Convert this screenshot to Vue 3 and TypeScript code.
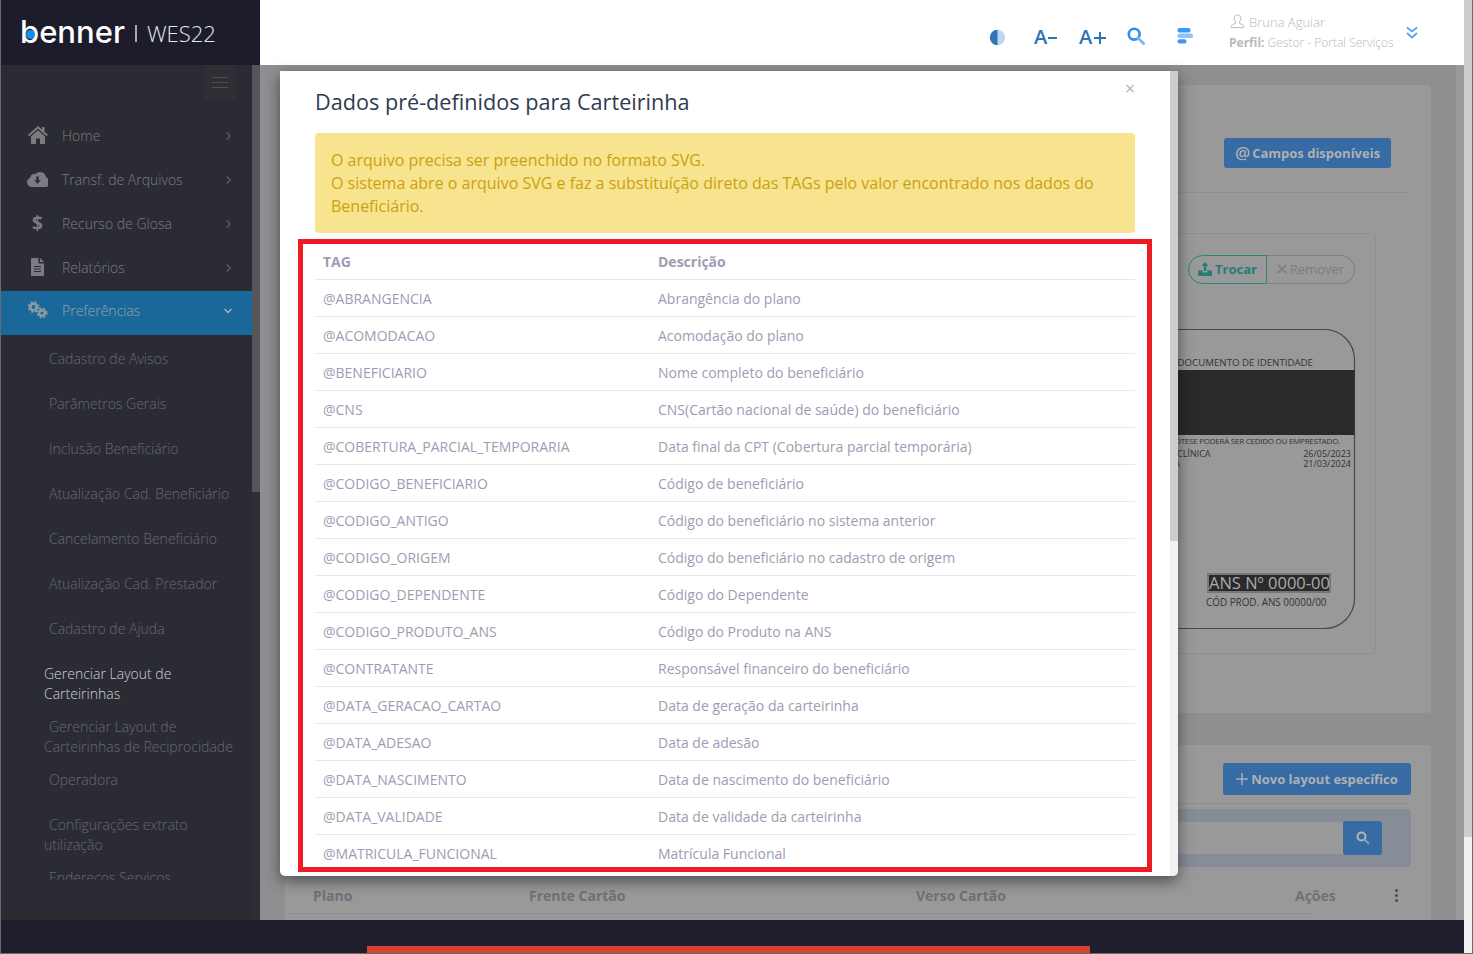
<template>
  <div class="page">
    <div class="window">
      <header class="top">
        <div class="brand">
          <span class="logo">benner<i class="logo-dot"></i></span>
          <span class="brand-sep"></span>
          <span class="brand-name">WES22</span>
        </div>
        <div class="topbar">
          <svg class="ico-contrast" viewBox="0 0 16 16" width="17" height="17">
            <circle cx="8" cy="8" r="7.2" fill="#bcd6ee" />
            <path d="M8 .8a7.2 7.2 0 0 0 0 14.4z" fill="#2f74b5" />
          </svg>
          <span class="font-btn minus">A<i></i></span>
          <span class="font-btn plus">A<i></i><b></b></span>
          <svg class="ico-search" viewBox="0 0 18 18" width="18" height="18">
            <circle cx="7.2" cy="7.2" r="5.4" fill="none" stroke="#2a8ff0" stroke-width="2.6" />
            <path d="M11 11l5.6 5.6" stroke="#7db9ee" stroke-width="2.8" stroke-linecap="round" />
          </svg>
          <svg class="ico-tasks" viewBox="0 0 16 16" width="16" height="16">
            <rect x="0.5" y="0" width="13" height="4.4" rx="2" fill="#3a9bf4" />
            <rect x="0.5" y="5.6" width="15.5" height="4.4" rx="2" fill="#8cc4f7" />
            <rect x="0.5" y="11.2" width="9" height="4.4" rx="2" fill="#3a9bf4" />
          </svg>
          <div class="user">
            <div class="user-name">
              <svg viewBox="0 0 16 16" width="15" height="15" fill="none" stroke="#b9b9b9" stroke-width="1">
                <path d="M8 1c-2.300 0-3.500 1.700-3.500 3.800 0 1.500.6 2.900 1.500 3.700v1.400c-1.800.8-4.500 1.500-4.800 3.100v1.500h13.600V13c-.3-1.600-3-2.300-4.800-3.100V8.500c.9-.8 1.500-2.200 1.500-3.700C11.500 2.700 10.300 1 8 1z" />
              </svg>
              Bruna Aguiar
            </div>
            <div class="user-role"><b>Perfil:</b> Gestor - Portal Serviços</div>
          </div>
          <svg class="ico-more" viewBox="0 0 12 13" width="12" height="13" fill="none" stroke="#4da3ff" stroke-width="1.7">
            <path d="M1 1.500l5 4 5-4M1 7l5 4.500L11 7" />
          </svg>
        </div>
      </header>

      <div class="middle">
        <aside class="sidebar">
          <div class="side-inner">
            <div class="burger-row">
              <div class="burger"><i></i><i></i><i></i></div>
            </div>
            <nav class="menu">
              <div class="menu-item" v-for="item in menuItems" :key="item.label" :class="{ active: item.active }">
                <span class="menu-ico">
                  <svg v-if="item.icon === 'home'" viewBox="0 0 20 18" width="20" height="18" fill="#7b7c81">
                    <path d="M10 0l4 3.500V1h2.500v4.700L20 8.800l-1.300 1.400L10 2.700 1.300 10.200 0 8.800z" />
                    <path d="M10 4.300l7 6V17a1 1 0 0 1-1 1h-4v-5.500H8V18H4a1 1 0 0 1-1-1v-6.700z" />
                  </svg>
                  <svg v-else-if="item.icon === 'cloud'" viewBox="0 0 21 16" width="21" height="16">
                    <path d="M5 16a4.800 4.800 0 0 1-1.700-9.300A4 4 0 0 1 8.500 3 6 6 0 0 1 19 6.500a4.800 4.800 0 0 1-2 9.500z" fill="#7b7c81" />
                    <path d="M9.300 5.500h2.400v3.700h2.100l-3.300 3.500-3.300-3.500h2.100z" fill="#2b2c33" />
                  </svg>
                  <span v-else-if="item.icon === 'dollar'" class="dollar">$</span>
                  <svg v-else-if="item.icon === 'file'" viewBox="0 0 13 18" width="13" height="18">
                    <path d="M1 0h6.500v5.500H13V17a1 1 0 0 1-1 1H1a1 1 0 0 1-1-1V1a1 1 0 0 1 1-1zM9 0l4 4H9z" fill="#7b7c81" />
                    <path d="M3 8.500h7M3 11h7M3 13.500h7" stroke="#2b2c33" stroke-width="1" />
                  </svg>
                  <svg v-else viewBox="0 0 21 18" width="21" height="18" fill="none" stroke="#8e9aa5">
                    <circle cx="6.500" cy="6" r="3.200" stroke-width="2.600" />
                    <circle cx="6.500" cy="6" r="5" stroke-width="1.800" stroke-dasharray="2 2" />
                    <circle cx="15" cy="12" r="2.800" stroke-width="2.400" />
                    <circle cx="15" cy="12" r="4.600" stroke-width="1.800" stroke-dasharray="2 1.700" />
                  </svg>
                </span>
                <span class="menu-label">{{ item.label }}</span>
                <svg class="menu-arrow" viewBox="0 0 8 10" :width="item.active ? 10 : 7" height="10" fill="none" stroke-width="1.300">
                  <path v-if="item.active" d="M.5 3l3.500 3.500L7.500 3" stroke="#9cb6c8" />
                  <path v-else d="M2 1l4 4-4 4" stroke="#62636a" />
                </svg>
              </div>
              <div
                v-for="sub in subItems"
                :key="sub.label"
                class="sub-item"
                :class="[{ current: sub.current }, sub.kind]"
              >{{ sub.label }}</div>
            </nav>
          </div>
          <div class="side-bar-track"><div class="side-bar-thumb"></div></div>
        </aside>

        <main class="main">
          <div class="content">
            <section class="card first">
              <div class="card-head">
                <button class="btn btn-fields"><span class="at">@</span>Campos disponíveis</button>
              </div>
              <div class="rule"></div>
              <div class="box">
                <div class="switcher">
                  <span class="swap">
                    <svg viewBox="0 0 14 14" width="14" height="14" fill="#257d75">
                      <path d="M7 0l3.500 4H8.200v5H5.800V4H3.500z" />
                      <path d="M1 8.500h3.500v2h5v-2H13a1 1 0 0 1 1 1V13a1 1 0 0 1-1 1H1a1 1 0 0 1-1-1V9.500a1 1 0 0 1 1-1z" />
                    </svg>
                    Trocar
                  </span>
                  <span class="remove">
                    <svg viewBox="0 0 10 10" width="10" height="10" stroke="#7c7c7c" stroke-width="1.500">
                      <path d="M1 1l8 8M9 1l-8 8" />
                    </svg>
                    Remover
                  </span>
                </div>
                <svg class="layout-card" viewBox="0 0 500 300" width="500" height="300">
                  <rect x="0.500" y="0.500" width="499" height="299" rx="30" fill="none" stroke="#474747" stroke-width="1.200" />
                  <text x="458" y="37" text-anchor="end" class="t9">PORTE UM DOCUMENTO DE IDENTIDADE</text>
                  <rect x="1" y="41" width="498.500" height="65" fill="#2b2a2b" />
                  <text x="485" y="115" text-anchor="end" class="t8">NESTA HIPÓTESE PODERÁ SER CEDIDO OU EMPRESTADO.</text>
                  <text x="322" y="128" class="t-date">CLÍNICA</text>
                  <text x="325" y="138" text-anchor="end" class="t-date">EMPRESA</text>
                  <text x="496" y="128" text-anchor="end" class="t-date">26/05/2023</text>
                  <text x="496" y="138" text-anchor="end" class="t-date">21/03/2024</text>
                  <svg x="352" y="244" width="124" height="20">
                    <rect x="1" y="1" width="122" height="18" fill="#2b2a2b" stroke="#777" stroke-width="2" />
                    <text x="2" y="16" class="ans">ANS Nº 0000-00</text>
                  </svg>
                  <text x="351" y="277" class="t-code">CÓD PROD. ANS 00000/00</text>
                </svg>
              </div>
            </section>

            <section class="card second">
              <div class="card-head-two">
                <button class="btn btn-new">
                  <svg viewBox="0 0 12 12" width="12" height="12" stroke="#a9adb2" stroke-width="1.500">
                    <path d="M6 0v12M0 6h12" />
                  </svg>
                  Novo layout específico
                </button>
              </div>
              <div class="rule thin"></div>
              <div class="filter">
                <div class="filter-input"></div>
                <button class="btn-search">
                  <svg viewBox="0 0 14 14" width="14" height="14" fill="none">
                    <circle cx="5.500" cy="5.500" r="4" stroke="#b3b8bd" stroke-width="2" />
                    <path d="M8.500 8.500l4.500 4.500" stroke="#8aa0b8" stroke-width="2" />
                  </svg>
                </button>
              </div>
              <div class="grid-head">
                <span>Plano</span>
                <span>Frente Cartão</span>
                <span>Verso Cartão</span>
                <span>Ações</span>
                <span class="kebab"><i></i><i></i><i></i></span>
              </div>
            </section>
          </div>
          <div class="main-band"></div>
        </main>
      </div>

      <footer class="footer"><div class="footer-bar"></div></footer>
    </div>
    <div class="page-scroll"><div class="page-thumb"></div></div>

    <div class="modal">
      <div class="modal-body">
        <span class="modal-close">×</span>
        <h4 class="modal-title">Dados pré-definidos para Carteirinha</h4>
        <div class="alert">
          O arquivo precisa ser preenchido no formato SVG.<br />
          O sistema abre o arquivo SVG e faz a substituíção direto das TAGs pelo valor encontrado nos dados do Beneficiário.
        </div>
        <table class="tags">
          <thead>
            <tr><th>TAG</th><th>Descrição</th></tr>
          </thead>
          <tbody>
            <tr v-for="row in tagRows" :key="row.tag">
              <td>{{ row.tag }}</td>
              <td>{{ row.description }}</td>
            </tr>
          </tbody>
        </table>
      </div>
      <div class="modal-scroll"><div class="modal-thumb"></div></div>
    </div>

    <div class="highlight"></div>
  </div>
</template>

<script setup lang="ts">
import { ref } from 'vue';

interface MenuItem {
  label: string;
  icon: string;
  active?: boolean;
}

interface SubItem {
  label: string;
  current?: boolean;
  kind?: string;
}

interface TagRow {
  tag: string;
  description: string;
}

const menuItems = ref<MenuItem[]>([
  { label: 'Home', icon: 'home' },
  { label: 'Transf. de Arquivos', icon: 'cloud' },
  { label: 'Recurso de Glosa', icon: 'dollar' },
  { label: 'Relatórios', icon: 'file' },
  { label: 'Preferências', icon: 'cogs', active: true }
]);

const subItems = ref<SubItem[]>([
  { label: 'Cadastro de Avisos' },
  { label: 'Parâmetros Gerais' },
  { label: 'Inclusão Beneficiário' },
  { label: 'Atualização Cad. Beneficiário' },
  { label: 'Cancelamento Beneficiário' },
  { label: 'Atualização Cad. Prestador' },
  { label: 'Cadastro de Ajuda' },
  { label: 'Gerenciar Layout de Carteirinhas', current: true },
  { label: 'Gerenciar Layout de Carteirinhas de Reciprocidade', kind: 'flush' },
  { label: 'Operadora' },
  { label: 'Configurações extrato utilização' },
  { label: 'Endereços Serviços', kind: 'flush-top' }
]);

const tagRows = ref<TagRow[]>([
  { tag: '@ABRANGENCIA', description: 'Abrangência do plano' },
  { tag: '@ACOMODACAO', description: 'Acomodação do plano' },
  { tag: '@BENEFICIARIO', description: 'Nome completo do beneficiário' },
  { tag: '@CNS', description: 'CNS(Cartão nacional de saúde) do beneficiário' },
  { tag: '@COBERTURA_PARCIAL_TEMPORARIA', description: 'Data final da CPT (Cobertura parcial temporária)' },
  { tag: '@CODIGO_BENEFICIARIO', description: 'Código de beneficiário' },
  { tag: '@CODIGO_ANTIGO', description: 'Código do beneficiário no sistema anterior' },
  { tag: '@CODIGO_ORIGEM', description: 'Código do beneficiário no cadastro de origem' },
  { tag: '@CODIGO_DEPENDENTE', description: 'Código do Dependente' },
  { tag: '@CODIGO_PRODUTO_ANS', description: 'Código do Produto na ANS' },
  { tag: '@CONTRATANTE', description: 'Responsável financeiro do beneficiário' },
  { tag: '@DATA_GERACAO_CARTAO', description: 'Data de geração da carteirinha' },
  { tag: '@DATA_ADESAO', description: 'Data de adesão' },
  { tag: '@DATA_NASCIMENTO', description: 'Data de nascimento do beneficiário' },
  { tag: '@DATA_VALIDADE', description: 'Data de validade da carteirinha' },
  { tag: '@MATRICULA_FUNCIONAL', description: 'Matrícula Funcional' }
]);
</script>

<style>
html,
body {
  margin: 0;
  overflow: hidden;
}
</style>

<style scoped>
.page {
  position: relative;
  width: 1473px;
  height: 954px;
  display: flex;
  overflow: hidden;
  font-family: "Open Sans", "Liberation Sans", sans-serif;
  background: #6b6b6b;
}

.window {
  width: 1463px;
  margin-left: 1px;
  height: 953px;
  display: flex;
  flex-direction: column;
}

.top {
  height: 65px;
  display: flex;
  flex: none;
}

.brand {
  width: 259px;
  background: #1c1c2b;
  display: flex;
  align-items: center;
  color: #fff;
  padding-left: 19px;
  box-sizing: border-box;
}

.logo {
  position: relative;
  font-family: Inter, sans-serif;
  font-size: 31px;
  font-weight: 500;
  line-height: 40px;
  margin-top: -2px;
}

.logo-dot {
  position: absolute;
  left: 6px;
  top: 18.500px;
  width: 9px;
  height: 9px;
  border-radius: 50%;
  background: #0b93f6;
}

.brand-sep {
  width: 2px;
  height: 17px;
  background: #a9a9b0;
  margin: 2px 10px 0 10px;
}

.brand-name {
  font-size: 22px;
  font-weight: 300;
  color: #e8e8ea;
  margin-top: 1px;
}

.topbar {
  flex: 1;
  background: #fff;
  display: flex;
  align-items: center;
  padding-left: 729px;
  box-sizing: border-box;
}

.ico-contrast {
  margin: 9px 0 0 0;
}

.font-btn {
  position: relative;
  width: 23px;
  margin-top: 8px;
  font-size: 20px;
  font-weight: 600;
  line-height: 24px;
  color: #2f74b5;
}

.font-btn i {
  position: absolute;
  left: 14px;
  top: 12px;
  width: 9px;
  height: 2px;
  background: #2f74b5;
}

.font-btn b {
  position: absolute;
  top: 7px;
  width: 2px;
  height: 12px;
  background: #2f74b5;
}

.minus {
  margin-left: 28px;
}

.plus {
  margin-left: 22px;
  width: 27px;
}

.plus i {
  left: 15px;
  width: 12px;
}

.plus b {
  left: 20px;
}

.ico-search {
  margin: 7px 0 0 21px;
}

.ico-tasks {
  margin: 7px 0 0 32px;
}

.user {
  margin: 0 0 0 36px;
  width: 176px;
  color: #b9b9b9;
  font-size: 13px;
  font-weight: 300;
}

.user-name {
  display: flex;
  align-items: center;
  gap: 4px;
  height: 20px;
  margin: -1px 0 1px 1px;
  line-height: 20px;
}

.user-role {
  font-size: 12px;
  line-height: 20px;
  white-space: nowrap;
}

.user-role b {
  font-weight: 700;
}

.ico-more {
  margin: -1px 0 0 1px;
}

.middle {
  height: 855px;
  flex: none;
  display: flex;
}

.sidebar {
  width: 259px;
  flex: none;
  display: flex;
  background: #2b2c33;
}

.side-inner {
  width: 251px;
  height: 815px;
  overflow: hidden;
  color: #7c7d82;
  font-size: 14px;
  font-weight: 300;
}

.burger-row {
  display: flex;
  justify-content: flex-end;
  padding-right: 16px;
  height: 49px;
}

.burger {
  width: 32px;
  height: 35px;
  background: #2f3035;
  border-radius: 0 0 3px 3px;
  display: flex;
  flex-direction: column;
  align-items: center;
  padding-top: 12px;
  box-sizing: border-box;
  gap: 4px;
}

.burger i {
  width: 16px;
  height: 1px;
  background: #4d4e53;
}

.menu-item {
  height: 44px;
  display: flex;
  align-items: center;
  padding-left: 26px;
  box-sizing: border-box;
}

.menu-item.active {
  margin: 1px 0 1.500px;
  padding-bottom: 4px;
  background: #1a6899;
  color: #97a3ad;
}

.menu-ico {
  width: 21px;
  display: flex;
  justify-content: center;
  margin-right: 14px;
  margin-top: -2px;
}

.dollar {
  font-size: 19px;
  font-weight: 700;
  line-height: 20px;
  color: #7b7c81;
}

.menu-label {
  flex: 1;
  line-height: 20px;
}

.menu-arrow {
  margin-right: 20px;
}

.active .menu-arrow {
  margin-right: 19px;
}

.sub-item {
  padding: 12.500px 16px 12.500px 43px;
  line-height: 20px;
  text-indent: 5px;
  color: #68696f;
}

.sub-item.current {
  color: #d0d0d2;
  text-indent: 0;
}

.sub-item.flush {
  padding-top: 0;
  padding-bottom: 1px;
}

.sub-item.flush-top {
  padding-top: 0;
}

.side-bar-track {
  width: 8px;
  height: 100%;
  background: #2e2f35;
}

.side-bar-thumb {
  height: 427px;
  background: #555659;
}

.main {
  flex: 1;
  display: flex;
  background: #8e8f91;
  overflow: hidden;
}

.content {
  flex: 1;
  padding: 20px 25px 0;
  box-sizing: border-box;
  display: flex;
  flex-direction: column;
  align-items: stretch;
}

.main-band {
  width: 8px;
  background: #999a9b;
}

.card {
  background: #999;
  border-radius: 4px;
  flex: none;
}

.first {
  height: 628px;
  margin-bottom: 32px;
}

.card-head {
  display: flex;
  justify-content: flex-end;
  padding: 53px 40px 0 0;
  height: 83px;
  box-sizing: border-box;
}

.btn {
  border: 0;
  background: #376ba3;
  border-radius: 3px;
  font-family: inherit;
  font-weight: 700;
  font-size: 13px;
  color: #aeb1b5;
  padding: 0;
}

.btn-fields {
  width: 167px;
  height: 30px;
  display: flex;
  align-items: center;
  justify-content: center;
  gap: 2px;
  padding-bottom: 1px;
}

.at {
  font-size: 17px;
  font-weight: 600;
  line-height: 20px;
}

.rule {
  height: 1px;
  margin: 24px 20px 0 0;
  background: #8f8f8f;
}

.box {
  margin: 40px 55px 0 auto;
  width: 560px;
  height: 421px;
  border: 1px solid #8f8f8f;
  border-radius: 4px;
  box-sizing: border-box;
  padding: 21px 20px 0 0;
  display: flex;
  flex-direction: column;
  align-items: flex-end;
}

.switcher {
  display: flex;
  height: 29px;
  font-size: 13px;
}

.swap {
  width: 79px;
  box-sizing: border-box;
  border: 1px solid #2a857c;
  border-radius: 15px 0 0 15px;
  color: #257d75;
  font-weight: 700;
  display: flex;
  align-items: center;
  justify-content: center;
  gap: 3px;
  padding-bottom: 2px;
}

.remove {
  width: 88px;
  box-sizing: border-box;
  border: 1px solid #7f7f7f;
  border-left: 0;
  border-radius: 0 15px 15px 0;
  color: #7c7c7c;
  display: flex;
  align-items: center;
  justify-content: center;
  gap: 3px;
  padding-bottom: 2px;
}

.layout-card {
  margin-top: 45px;
  overflow: visible;
}

.t9 {
  font-size: 9.700px;
  fill: #333;
}

.t-date {
  font-size: 9px;
  fill: #333;
}

.t-code {
  font-size: 9.900px;
  fill: #333;
}

.t8 {
  font-size: 8px;
  letter-spacing: -0.250px;
  fill: #333;
}

.ans {
  font-size: 16.500px;
  fill: #aaa;
}

.second {
  height: 300px;
}

.card-head-two {
  display: flex;
  justify-content: flex-end;
  padding: 18px 20px 0 0;
  height: 58px;
  box-sizing: border-box;
}

.btn-new {
  width: 188px;
  height: 32px;
  display: flex;
  align-items: center;
  justify-content: center;
  gap: 3px;
}

.rule.thin {
  margin-top: 0;
}

.filter {
  margin: 5px 20px 0 0;
  height: 58px;
  background: #878d98;
  border-radius: 3px;
  display: flex;
  align-items: center;
  padding-right: 29px;
  box-sizing: border-box;
}

.filter-input {
  flex: 1;
  height: 32px;
  background: #999;
}

.btn-search {
  width: 39px;
  height: 34px;
  border: 0;
  padding: 2px 0 0;
  background: #376ba3;
  border-radius: 3px;
}

.grid-head {
  display: grid;
  grid-template-columns: 216px 387px 379px 100px 1fr;
  width: 1002px;
  padding: 19px 0 8px 28px;
  border-bottom: 1px solid #8f8f8f;
  font-size: 14px;
  line-height: 19px;
  font-weight: 700;
  color: #6f7079;
}

.kebab {
  display: flex;
  flex-direction: column;
  gap: 2px;
  align-items: center;
  width: 3px;
  padding-top: 3px;
}

.kebab i {
  width: 3px;
  height: 3px;
  border-radius: 50%;
  background: #4e4e52;
}

.footer {
  flex: 1;
  background: #1e1e2c;
  display: flex;
  align-items: flex-end;
}

.footer-bar {
  width: 723px;
  height: 7px;
  margin-left: 366px;
  background: #d8432f;
}

.page-scroll {
  width: 8px;
  height: 953px;
  background: #f1f1f1;
  margin-right: 1px;
}

.page-thumb {
  height: 837px;
  background: #cdcdcd;
}

.modal {
  position: absolute;
  left: 280px;
  top: 71px;
  width: 898px;
  height: 805px;
  background: #fff;
  border-radius: 0 0 5px 5px;
  box-shadow: 0 5px 15px rgba(0, 0, 0, 0.5);
  display: flex;
  overflow: hidden;
}

.modal-body {
  flex: 1;
  position: relative;
  padding: 0 35px;
  overflow: hidden;
}

.modal-close {
  position: absolute;
  left: 845px;
  top: 5px;
  font-size: 18px;
  line-height: 24px;
  color: #b5b5b5;
}

.modal-title {
  margin: 0;
  padding-top: 16px;
  height: 62px;
  box-sizing: border-box;
  font-size: 21.650px;
  line-height: 30px;
  font-weight: 400;
  color: #2f3a52;
}

.alert {
  height: 100px;
  box-sizing: border-box;
  padding: 15.500px 16px;
  border-radius: 4px;
  background: #f8e38e;
  color: #c9a20e;
  font-size: 16px;
  line-height: 23px;
}

.tags {
  width: 820px;
  margin-top: 10px;
  border-collapse: collapse;
  table-layout: fixed;
  font-size: 14px;
  color: #9c9db2;
}

.tags th {
  height: 36px;
  padding: 0 8px;
  text-align: left;
  font-weight: 700;
  border-bottom: 1px solid #e8e8ee;
}

.tags th:first-child {
  width: 319px;
}

.tags td {
  height: 37px;
  box-sizing: border-box;
  padding: 0 8px;
  border-bottom: 1px solid #e8e8ee;
}

.modal-scroll {
  width: 8px;
  background: #f1f1f1;
}

.modal-thumb {
  height: 470px;
  background: #cdcdcd;
}

.highlight {
  position: absolute;
  left: 298px;
  top: 239px;
  width: 854px;
  height: 633px;
  box-sizing: border-box;
  border: 5px solid #ed1c24;
  pointer-events: none;
}
</style>
